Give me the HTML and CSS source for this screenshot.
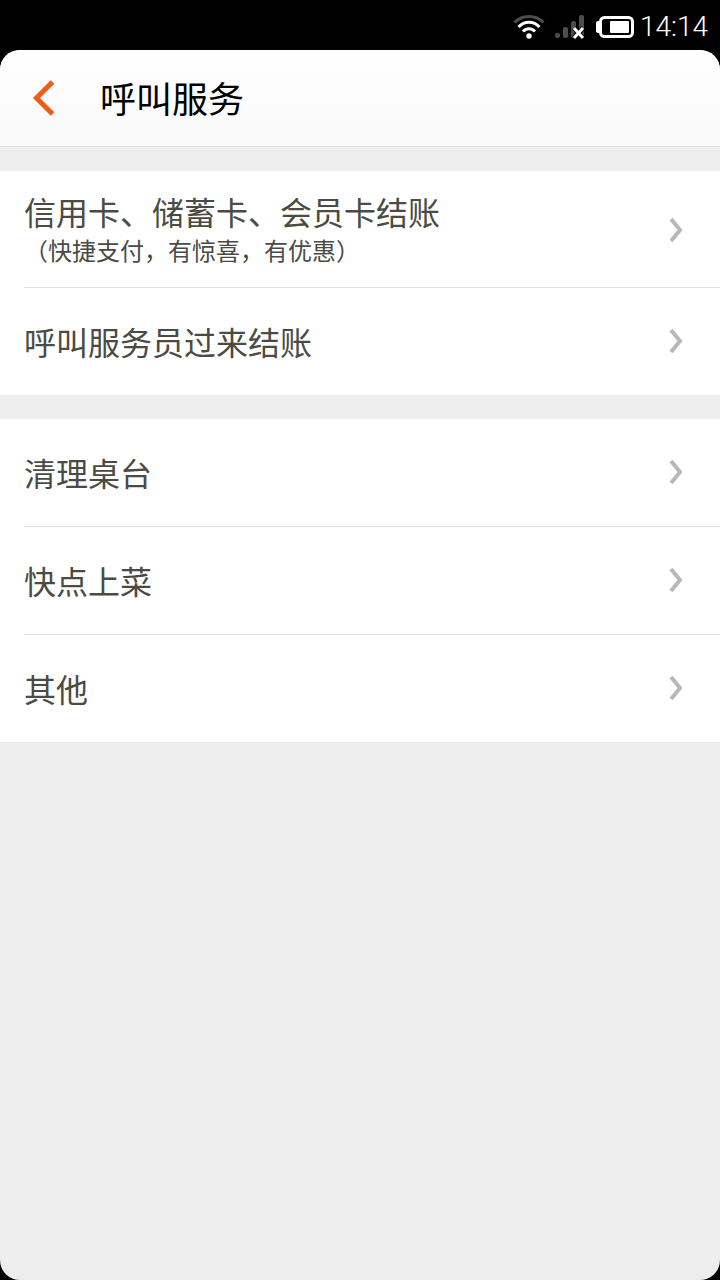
FILE: index.html
```html
<!DOCTYPE html>
<html lang="zh-CN">
<head>
    <meta charset="UTF-8">
    <meta name="viewport" content="width=device-width, initial-scale=1.0">
    <title>呼叫服务</title>
    <link rel="stylesheet" href="styles.css">
</head>
<body>

<div class="status-bar">
    <svg class="wifi" width="32" height="26" viewBox="0 0 32 26" fill="none" stroke="#fff" stroke-width="3" aria-hidden="true">
        <path d="M1.5 8.5C9.5 .5 22.5 .5 30.5 8.5" stroke="#4d4d4d"/>
        <path d="M5.5 13C11.5 6.5 20.5 6.5 26.5 13"/>
        <path d="M10 17.5C13.5 13.7 18.5 13.7 22 17.5"/>
        <circle cx="16" cy="22" r="2.7" fill="#fff" stroke="none"/>
    </svg>
    <svg class="signal" width="30" height="26" viewBox="0 0 30 26" aria-hidden="true">
        <g fill="#4d4d4d">
            <rect x="0" y="19" width="5" height="5" rx="2"/>
            <rect x="8" y="13" width="5" height="11" rx="2"/>
            <rect x="16" y="7" width="5" height="17" rx="2"/>
            <rect x="24" y="1" width="5" height="23" rx="2"/>
        </g>
        <path d="M19 14L28 24M28 14L19 24" stroke="#000" stroke-width="5"/>
        <path d="M19 14L28 24M28 14L19 24" stroke="#fff" stroke-width="3"/>
    </svg>
    <svg class="battery" width="38" height="22" viewBox="0 0 38 22" aria-hidden="true">
        <rect x="0" y="5" width="5" height="12" rx="2" fill="#fff"/>
        <rect x="4.5" y="1.5" width="32" height="19" rx="4" fill="#000" stroke="#fff" stroke-width="3"/>
        <rect x="14" y="5" width="19" height="12" rx="1" fill="#fff"/>
    </svg>
    <span class="time">14:14</span>
</div>

<div class="screen">
    <header>
        <button class="back-btn" type="button" aria-label="返回">
            <svg width="24" height="36" viewBox="0 0 24 36" fill="none" stroke="#ee5c1a" stroke-width="5" aria-hidden="true">
                <path d="M20.500 2L4.500 18L20.500 34"/>
            </svg>
        </button>
        <h1>呼叫服务</h1>
    </header>

    <ul class="service-list">
        <li><a class="tall" href="#card">
            <span class="label">信用卡、储蓄卡、会员卡结账<small>（快捷支付，有惊喜，有优惠）</small></span>
            <svg class="arrow" viewBox="0 0 16 26" aria-hidden="true"><path d="M3 2L12 13L3 24"/></svg>
        </a></li>
        <li><a href="#waiter">
            <span class="label">呼叫服务员过来结账</span>
            <svg class="arrow" viewBox="0 0 16 26" aria-hidden="true"><path d="M3 2L12 13L3 24"/></svg>
        </a></li>
    </ul>

    <ul class="service-list">
        <li><a href="#clean">
            <span class="label">清理桌台</span>
            <svg class="arrow" viewBox="0 0 16 26" aria-hidden="true"><path d="M3 2L12 13L3 24"/></svg>
        </a></li>
        <li><a href="#hurry">
            <span class="label">快点上菜</span>
            <svg class="arrow" viewBox="0 0 16 26" aria-hidden="true"><path d="M3 2L12 13L3 24"/></svg>
        </a></li>
        <li><a href="#other">
            <span class="label">其他</span>
            <svg class="arrow" viewBox="0 0 16 26" aria-hidden="true"><path d="M3 2L12 13L3 24"/></svg>
        </a></li>
    </ul>
</div>

</body>
</html>
```
FILE: styles.css
```css
* {
    box-sizing: border-box;
}
body {
    display: flex;
    flex-direction: column;
    min-height: 100vh;
    margin: 0;
    background: #000;
    font-family: "Noto Sans CJK SC", sans-serif;
}
.status-bar {
    display: flex;
    align-items: center;
    justify-content: flex-end;
    height: 50px;
    padding: 4px 12px 0 0;
    color: #fff;
}
.signal {
    margin-left: 10px;
}
.battery {
    margin-left: 11px;
}
.time {
    margin-left: 6px;
    font-family: Roboto, sans-serif;
    font-size: 28px;
    font-weight: 300;
    line-height: 32px;
}
.screen {
    flex: 1;
    overflow: hidden;
    border-radius: 20px;
    background: #ededed;
}
header {
    display: flex;
    align-items: center;
    height: 97px;
    border-bottom: 1px solid #e2e2e2;
    background: linear-gradient(#fff, #f9f9f9);
}
.back-btn {
    display: flex;
    padding: 12px 32px;
    border: none;
    background: none;
    cursor: pointer;
}
h1 {
    margin: 0 0 0 12px;
    padding-bottom: 2px;
    color: #000;
    font-size: 36px;
    font-weight: 400;
    line-height: 48px;
}
.service-list {
    list-style: none;
    margin: 24px 0 0;
    padding: 0;
    background: #fff;
}
.service-list li {
    padding-left: 24px;
}
.service-list a {
    display: flex;
    align-items: center;
    justify-content: space-between;
    min-height: 108px;
    padding: 0 36px 2px 0;
    border-bottom: 1px solid #e0e0e0;
    color: #4a4b43;
    text-decoration: none;
}
.service-list li:last-child a {
    min-height: 107px;
    border-bottom: none;
}
.service-list .tall {
    min-height: 117px;
    padding: 1px 36px 0 0;
}
.label {
    font-size: 32px;
    line-height: 40px;
}
.label small {
    display: block;
    font-size: 24px;
    line-height: 38px;
}
.arrow {
    width: 16px;
    height: 26px;
    flex: none;
    fill: none;
    stroke: #b8b8b8;
    stroke-width: 4;
}
```
